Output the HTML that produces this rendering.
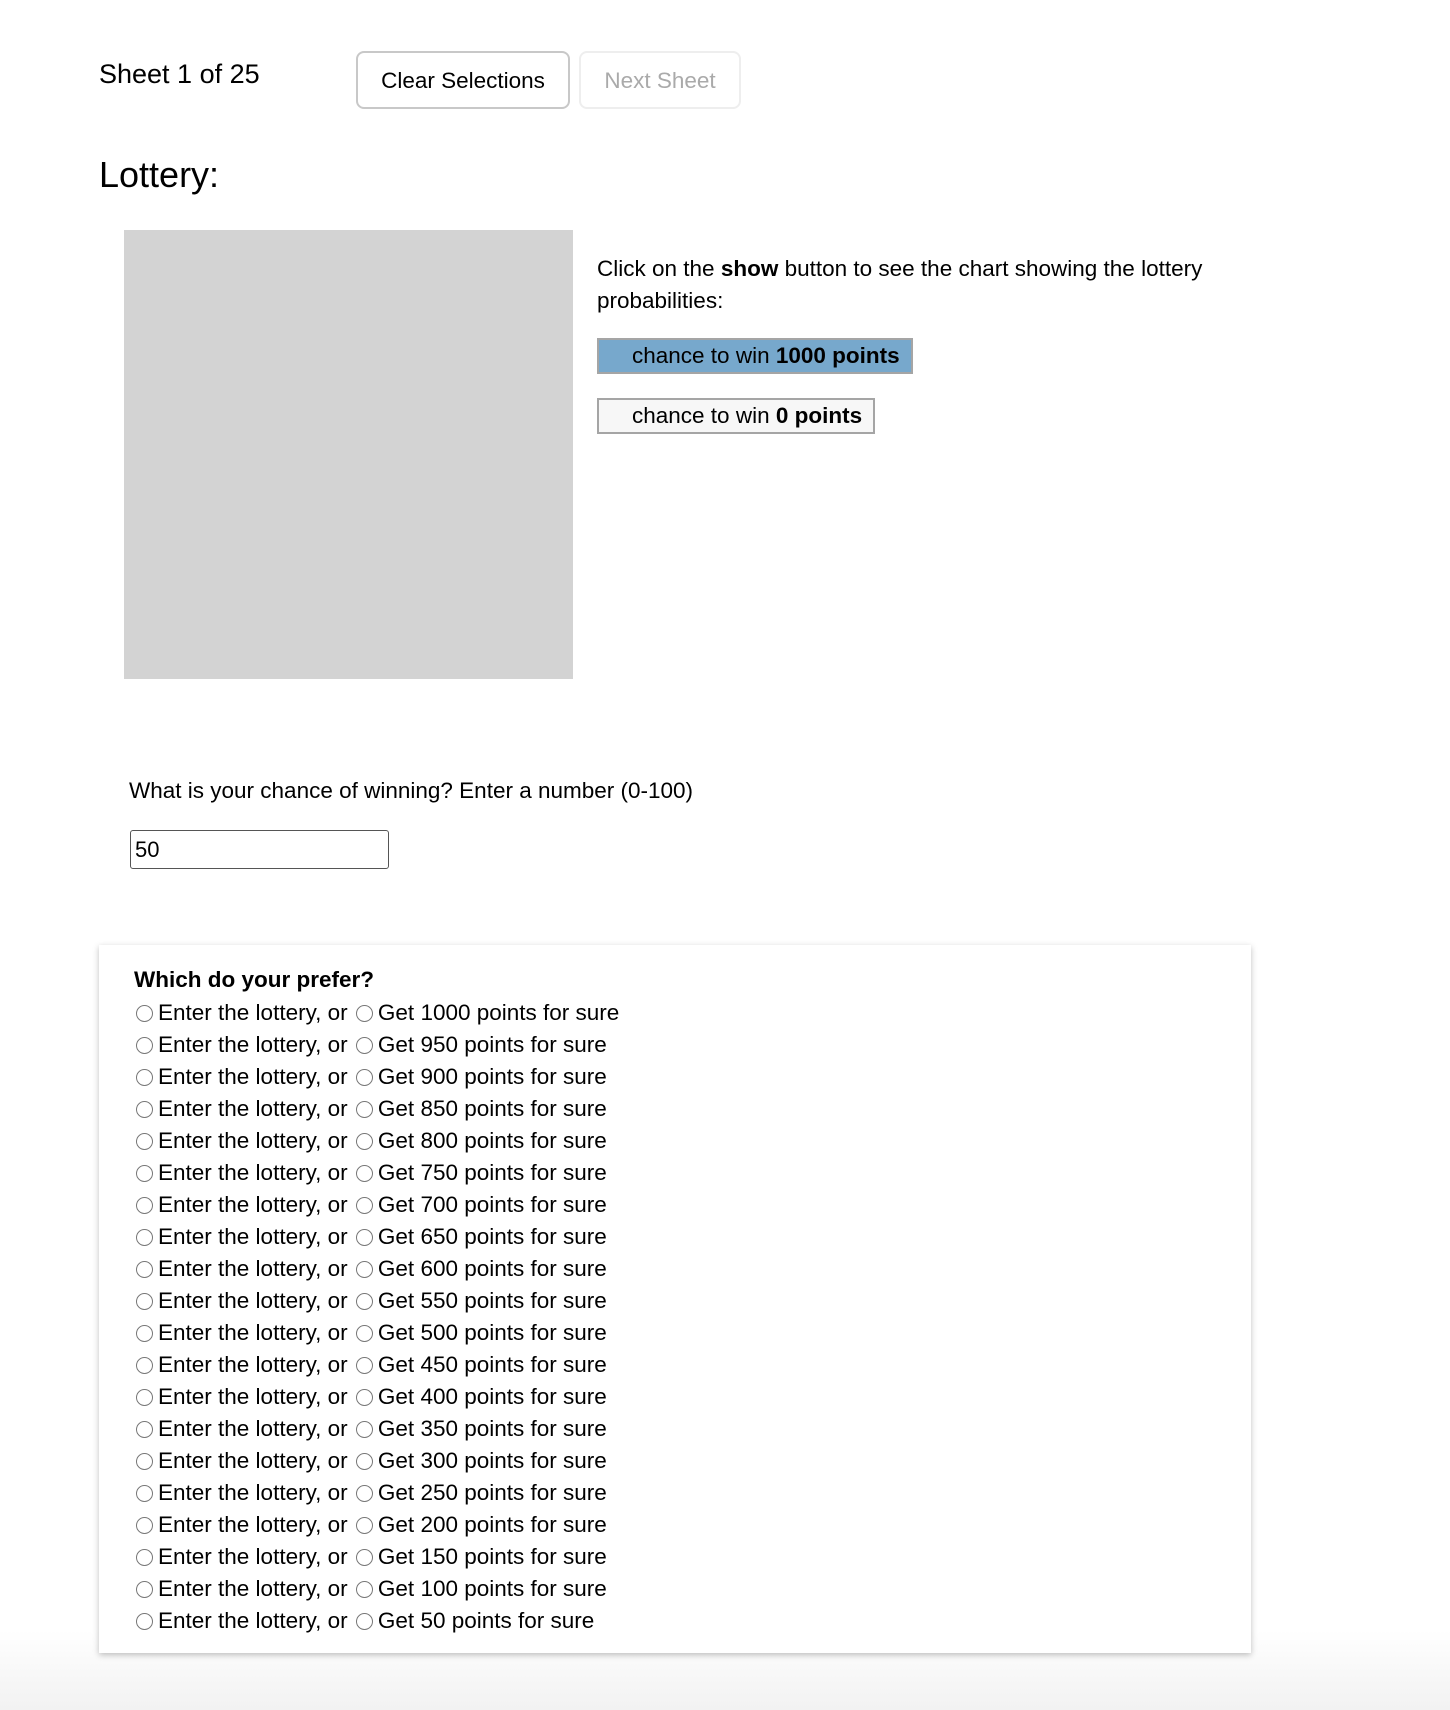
<!DOCTYPE html>
<html><head><meta charset="utf-8"><style>
body{margin:0;width:1450px;height:1710px;position:relative;font-family:"Liberation Sans",Arial,sans-serif;color:#000;background:linear-gradient(#fff 0,#fff 1630px,#f2f2f2 1710px);overflow:hidden}
.a{position:absolute}
.btn{position:absolute;box-sizing:border-box;border-radius:8px;font-size:22.5px;text-align:center;line-height:56px;background:#fff}
.row{height:32px;line-height:32px;font-size:22.5px;white-space:nowrap;display:flex;align-items:center}
.r{display:inline-block;width:17px;height:17px;border:1px solid #777;border-radius:50%;box-sizing:border-box;margin:0 5px 0 2px}
</style></head><body>
<div class="a" style="left:99px;top:59px;font-size:27px">Sheet 1 of 25</div>
<div class="btn" style="left:356px;top:51px;width:214px;height:58px;border:2px solid #c8c8c8">Clear Selections</div>
<div class="btn" style="left:579px;top:51px;width:162px;height:58px;border:2px solid #eee;color:#aaa">Next Sheet</div>
<div class="a" style="left:99px;top:154px;font-size:36px">Lottery:</div>
<div class="a" style="left:124px;top:230px;width:449px;height:449px;background:#d3d3d3"></div>
<div class="a" style="left:597px;top:253px;width:660px;font-size:22.5px;line-height:32px">Click on the <b>show</b> button to see the chart showing the lottery probabilities:</div>
<div class="a" style="left:597px;top:338px;width:316px;height:36px;box-sizing:border-box;border:2px solid #a5a5a5;background:#77a8cc;font-size:22.5px;line-height:32px;padding-left:33px">chance to win <b>1000 points</b></div>
<div class="a" style="left:597px;top:398px;width:278px;height:36px;box-sizing:border-box;border:2px solid #a5a5a5;background:#f7f7f7;font-size:22.5px;line-height:32px;padding-left:33px">chance to win <b>0 points</b></div>
<div class="a" style="left:129px;top:778px;font-size:22.5px">What is your chance of winning? Enter a number (0-100)</div>
<div class="a" style="left:130px;top:830px;width:259px;height:39px;box-sizing:border-box;border:1px solid #555;border-radius:3px;font-size:22px;line-height:37px;padding-left:4px">50</div>
<div class="a" style="left:99px;top:945px;width:1152px;height:708px;background:#fff;box-shadow:0 2px 6px rgba(0,0,0,.25)"></div>
<div class="a" style="left:134px;top:967px;font-size:22.5px;font-weight:bold">Which do your prefer?</div>
<div class="a" style="left:134px;top:997px">
<div class="row"><span class="r"></span>Enter the lottery, or&nbsp;<span class="r"></span>Get 1000 points for sure</div>
<div class="row"><span class="r"></span>Enter the lottery, or&nbsp;<span class="r"></span>Get 950 points for sure</div>
<div class="row"><span class="r"></span>Enter the lottery, or&nbsp;<span class="r"></span>Get 900 points for sure</div>
<div class="row"><span class="r"></span>Enter the lottery, or&nbsp;<span class="r"></span>Get 850 points for sure</div>
<div class="row"><span class="r"></span>Enter the lottery, or&nbsp;<span class="r"></span>Get 800 points for sure</div>
<div class="row"><span class="r"></span>Enter the lottery, or&nbsp;<span class="r"></span>Get 750 points for sure</div>
<div class="row"><span class="r"></span>Enter the lottery, or&nbsp;<span class="r"></span>Get 700 points for sure</div>
<div class="row"><span class="r"></span>Enter the lottery, or&nbsp;<span class="r"></span>Get 650 points for sure</div>
<div class="row"><span class="r"></span>Enter the lottery, or&nbsp;<span class="r"></span>Get 600 points for sure</div>
<div class="row"><span class="r"></span>Enter the lottery, or&nbsp;<span class="r"></span>Get 550 points for sure</div>
<div class="row"><span class="r"></span>Enter the lottery, or&nbsp;<span class="r"></span>Get 500 points for sure</div>
<div class="row"><span class="r"></span>Enter the lottery, or&nbsp;<span class="r"></span>Get 450 points for sure</div>
<div class="row"><span class="r"></span>Enter the lottery, or&nbsp;<span class="r"></span>Get 400 points for sure</div>
<div class="row"><span class="r"></span>Enter the lottery, or&nbsp;<span class="r"></span>Get 350 points for sure</div>
<div class="row"><span class="r"></span>Enter the lottery, or&nbsp;<span class="r"></span>Get 300 points for sure</div>
<div class="row"><span class="r"></span>Enter the lottery, or&nbsp;<span class="r"></span>Get 250 points for sure</div>
<div class="row"><span class="r"></span>Enter the lottery, or&nbsp;<span class="r"></span>Get 200 points for sure</div>
<div class="row"><span class="r"></span>Enter the lottery, or&nbsp;<span class="r"></span>Get 150 points for sure</div>
<div class="row"><span class="r"></span>Enter the lottery, or&nbsp;<span class="r"></span>Get 100 points for sure</div>
<div class="row"><span class="r"></span>Enter the lottery, or&nbsp;<span class="r"></span>Get 50 points for sure</div>
</div>
</body></html>
